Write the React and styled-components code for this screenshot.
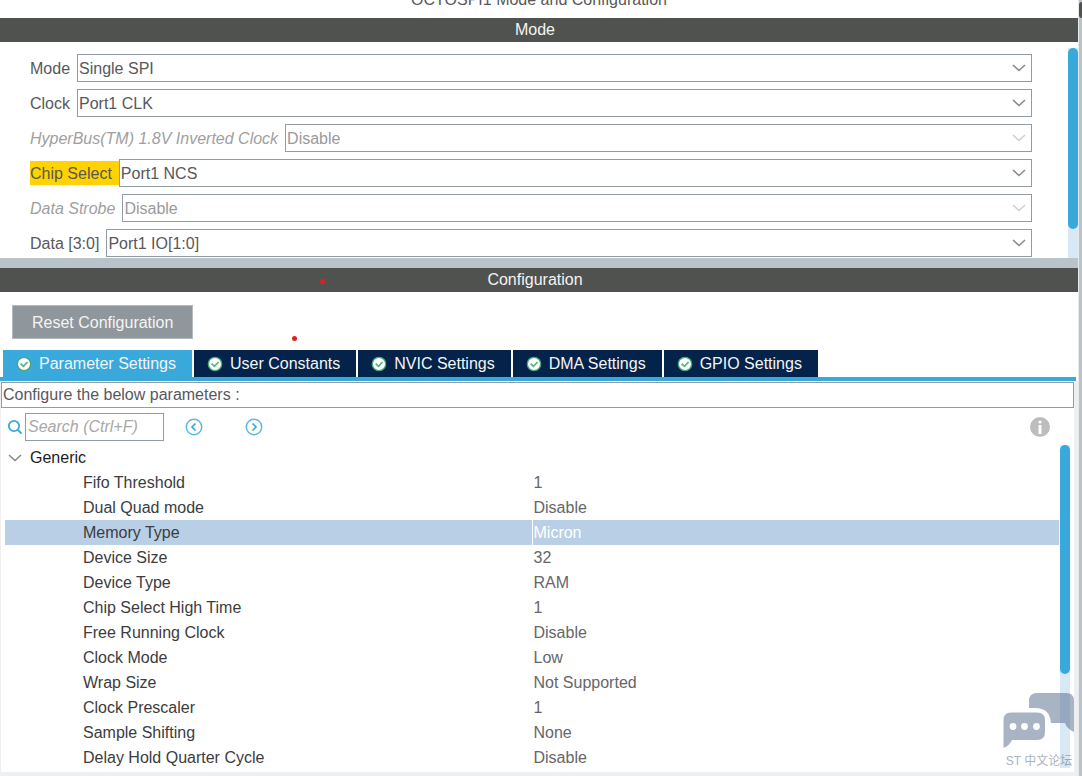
import React, { useState } from "react";
import styled, { createGlobalStyle } from "styled-components";

const modeFields = [
  { id: "mode", label: "Mode", value: "Single SPI" },
  { id: "clock", label: "Clock", value: "Port1 CLK" },
  {
    id: "hyperbus",
    label: "HyperBus(TM) 1.8V Inverted Clock",
    value: "Disable",
    disabled: true,
  },
  { id: "cs", label: "Chip Select", value: "Port1 NCS", marked: true },
  { id: "strobe", label: "Data Strobe", value: "Disable", disabled: true },
  { id: "data", label: "Data [3:0]", value: "Port1 IO[1:0]" },
];

const tabs = [
  "Parameter Settings",
  "User Constants",
  "NVIC Settings",
  "DMA Settings",
  "GPIO Settings",
];

const parameters = [
  ["Fifo Threshold", "1"],
  ["Dual Quad mode", "Disable"],
  ["Memory Type", "Micron"],
  ["Device Size", "32"],
  ["Device Type", "RAM"],
  ["Chip Select High Time", "1"],
  ["Free Running Clock", "Disable"],
  ["Clock Mode", "Low"],
  ["Wrap Size", "Not Supported"],
  ["Clock Prescaler", "1"],
  ["Sample Shifting", "None"],
  ["Delay Hold Quarter Cycle", "Disable"],
];

const Chevron = ({ color = "#8a8a8a" }) => (
  <svg width="14" height="8" viewBox="0 0 14 8" fill="none" aria-hidden="true">
    <path d="M1 1L7 6.5L13 1" stroke={color} strokeWidth="1.6" />
  </svg>
);

const CheckIcon = () => (
  <svg width="16" height="16" viewBox="0 0 16 16" aria-hidden="true">
    <circle cx="8" cy="8" r="6.7" fill="#fff" stroke="#45a877" strokeWidth="1.3" />
    <path
      d="M4.6 7.6L7.4 10.4L11.6 6"
      fill="none"
      stroke="#55b47c"
      strokeWidth="1.7"
    />
  </svg>
);

const SearchIcon = () => (
  <svg width="16" height="16" viewBox="0 0 16 16" fill="none" aria-hidden="true">
    <circle cx="7" cy="7" r="5.2" stroke="#39a9dc" strokeWidth="1.8" />
    <path d="M10.8 10.8L14.6 14.6" stroke="#39a9dc" strokeWidth="2" />
  </svg>
);

const ArrowIcon = ({ next }) => (
  <svg width="18" height="18" viewBox="0 0 18 18" fill="none" aria-hidden="true">
    <circle cx="9" cy="9" r="7.7" stroke="#5cb8e4" strokeWidth="1.5" />
    <path
      d={next ? "M7.5 5.5L11 9L7.5 12.5" : "M10.5 5.5L7 9L10.5 12.5"}
      stroke="#39a9dc"
      strokeWidth="1.7"
    />
  </svg>
);

const InfoIcon = () => (
  <svg width="20" height="20" viewBox="0 0 20 20" aria-hidden="true">
    <circle cx="10" cy="10" r="10" fill="#bdbdbd" />
    <circle cx="10" cy="5" r="1.6" fill="#fff" />
    <path d="M8.5 8H11.5V17H8.5Z" fill="#fff" />
  </svg>
);

const ForumLogo = () => (
  <svg width="72" height="56" viewBox="0 0 72 56" aria-hidden="true">
    <path
      d="M26 15V8Q26 0 34 0H63Q71 0 71 8V39Q64 36 62 30H48Q47 15 32 15Z"
      fill="#53698a"
    />
    <path
      d="M8 19.500H34Q42 19.500 42 27V39Q42 47 34 47H9Q7 52 .5 55V27Q.5 19.500 8 19.500Z"
      fill="#53698a"
    />
    <circle cx="10" cy="33.500" r="3.400" fill="#fff" />
    <circle cx="21.500" cy="33.500" r="3.400" fill="#fff" />
    <circle cx="33.500" cy="33.500" r="3.400" fill="#fff" />
  </svg>
);

const App = () => {
  const [activeTab, setActiveTab] = useState(0);
  const [selected, setSelected] = useState("Memory Type");
  const [open, setOpen] = useState(true);

  return (
    <>
      <GlobalStyle />
      <Page>
        <Main>
          <Title>OCTOSPI1 Mode and Configuration</Title>
          <SectionBar>Mode</SectionBar>
          <ModePanel>
            <ModeForm>
              {modeFields.map((field) => (
                <Field key={field.id}>
                  <FieldLabel
                    htmlFor={field.id}
                    $disabled={field.disabled}
                    $marked={field.marked}
                  >
                    {field.label}
                  </FieldLabel>
                  <SelectBox>
                    <Select id={field.id} disabled={field.disabled}>
                      <option>{field.value}</option>
                    </Select>
                    <Chevron color={field.disabled ? "#d0d0d0" : "#8a8a8a"} />
                  </SelectBox>
                </Field>
              ))}
            </ModeForm>
            <Track>
              <Thumb $length="86%" />
            </Track>
          </ModePanel>
          <Splitter />
          <SectionBar>
            Configuration
            <Dot $left={320} $top={11} />
          </SectionBar>
          <ConfigPanel>
            <ResetArea>
              <ResetButton type="button">Reset Configuration</ResetButton>
              <Dot $left={292} $top={44} />
            </ResetArea>
            <TabBar role="tablist">
              {tabs.map((tab, i) => (
                <Tab
                  key={tab}
                  type="button"
                  role="tab"
                  aria-selected={activeTab === i}
                  $active={activeTab === i}
                  onClick={() => setActiveTab(i)}
                >
                  <CheckIcon />
                  {tab}
                </Tab>
              ))}
            </TabBar>
            <TabBody>
              <Hint>Configure the below parameters :</Hint>
              <Toolbar>
                <SearchLabel htmlFor="search" aria-label="Search">
                  <SearchIcon />
                </SearchLabel>
                <SearchInput id="search" placeholder="Search (Ctrl+F)" />
                <IconButton type="button" aria-label="Previous">
                  <ArrowIcon />
                </IconButton>
                <IconButton type="button" aria-label="Next">
                  <ArrowIcon next />
                </IconButton>
                <InfoButton type="button" aria-label="Information">
                  <InfoIcon />
                </InfoButton>
              </Toolbar>
              <Tree>
                <Table>
                  <tbody>
                    <tr>
                      <GroupCell colSpan={2}>
                        <GroupButton
                          type="button"
                          aria-expanded={open}
                          onClick={() => setOpen(!open)}
                        >
                          <Chevron />
                          Generic
                        </GroupButton>
                      </GroupCell>
                    </tr>
                    {open &&
                      parameters.map(([name, value]) => (
                        <Row
                          key={name}
                          $selected={selected === name}
                          onClick={() => setSelected(name)}
                        >
                          <th scope="row">{name}</th>
                          <td>{value}</td>
                        </Row>
                      ))}
                  </tbody>
                </Table>
                <TreeTrack>
                  <Thumb $length="71%" />
                </TreeTrack>
              </Tree>
            </TabBody>
          </ConfigPanel>
        </Main>
        <Rail>
          <RailHandle />
        </Rail>
        <Watermark>
          <ForumLogo />
          ST 中文论坛
        </Watermark>
      </Page>
    </>
  );
};

export default App;

const GlobalStyle = createGlobalStyle`
  * {
    box-sizing: border-box;
  }
  body {
    margin: 0;
    background: #fff;
  }
  body, button, input, select {
    font-family: "Liberation Sans", Arial, "Noto Sans CJK SC", sans-serif;
    font-size: 16px;
    line-height: 18px;
    color: #58585c;
  }
  svg {
    display: block;
    flex-shrink: 0;
  }
`;

const Page = styled.div`
  position: relative;
  display: flex;
  min-height: 100vh;
`;

const Main = styled.main`
  flex: 1;
  min-width: 0;
  display: flex;
  flex-direction: column;
`;

const Title = styled.div`
  display: flex;
  justify-content: center;
  align-items: flex-end;
  height: 18px;
  padding-bottom: 9px;
  overflow: hidden;
`;

const SectionBar = styled.div`
  position: relative;
  padding: 3px 8px 3px 0;
  text-align: center;
  color: #f4f4f4;
  background: #50524f;
`;

const ModePanel = styled.div`
  display: flex;
  justify-content: space-between;
  padding-top: 6px;
`;

const ModeForm = styled.form`
  flex: 1;
  display: flex;
  flex-direction: column;
  gap: 7px;
  padding: 6px 0 1px 30px;
  margin-right: 36px;
`;

const Field = styled.div`
  display: flex;
  align-items: center;
`;

const FieldLabel = styled.label`
  padding: 4px 7px 2px 0;
  white-space: nowrap;
  font-style: ${({ $disabled }) => ($disabled ? "italic" : "normal")};
  color: ${({ $disabled }) => ($disabled ? "#a0a0a0" : "#58585c")};
  background: ${({ $marked }) => ($marked ? "#ffd200" : "transparent")};
`;

const SelectBox = styled.div`
  position: relative;
  flex: 1;
  svg {
    position: absolute;
    right: 6px;
    top: 10px;
    pointer-events: none;
  }
`;

const Select = styled.select`
  display: block;
  width: 100%;
  height: 28px;
  padding: 2px 24px 0 1px;
  appearance: none;
  border: 1px solid #939ba3;
  border-radius: 0;
  background: #fff;
  &:disabled {
    color: #9a9a9c;
    opacity: 1;
  }
`;

const Track = styled.div`
  width: 10px;
  flex-shrink: 0;
  background: #d9e8f5;
`;

const TreeTrack = styled(Track)`
  margin-bottom: 4px;
`;

const Thumb = styled.div`
  height: ${({ $length }) => $length};
  border-radius: 5px;
  background: #39a9dc;
`;

const Splitter = styled.div`
  height: 10px;
  background: #b8c4ca;
`;

const Dot = styled.span`
  position: absolute;
  left: ${({ $left }) => $left}px;
  top: ${({ $top }) => $top}px;
  width: 5px;
  height: 5px;
  border-radius: 50%;
  background: #e81c1c;
`;

const ConfigPanel = styled.div`
  flex: 1;
  display: flex;
  flex-direction: column;
`;

const ResetArea = styled.div`
  position: relative;
  padding: 13px 12px 11px;
`;

const ResetButton = styled.button`
  display: block;
  height: 34px;
  padding: 1px 19px 0;
  border: 1px solid #b4b9bd;
  color: #f4f4f4;
  background: #8f979d;
`;

const TabBar = styled.div`
  display: flex;
  gap: 2px;
  padding-left: 3px;
  margin-right: 2px;
  border-bottom: 4px solid #39a9dc;
`;

const Tab = styled.button`
  display: flex;
  align-items: center;
  gap: 7px;
  height: 27px;
  padding: 0 16px 0 13px;
  border: 0;
  white-space: nowrap;
  color: #f4f4f4;
  background: ${({ $active }) => ($active ? "#39a9dc" : "#03234b")};
`;

const TabBody = styled.div`
  flex: 1;
  display: flex;
  flex-direction: column;
  padding-top: 1px;
  border: solid #eeeff1;
  border-width: 0 4px 4px 1px;
`;

const Hint = styled.div`
  padding: 3px 1px;
  border: 1px solid #939ba3;
`;

const Toolbar = styled.div`
  display: flex;
  align-items: center;
  padding: 5px 24px 4px 6px;
`;

const SearchLabel = styled.label`
  margin-right: 2px;
`;

const SearchInput = styled.input`
  width: 139px;
  height: 28px;
  padding: 0 2px;
  margin-right: 21px;
  border: 1px solid #939ba3;
  border-radius: 0;
  &::placeholder {
    font-style: italic;
    color: #a8a8a8;
  }
`;

const IconButton = styled.button`
  padding: 0;
  margin-right: 42px;
  border: 0;
  background: none;
`;

const InfoButton = styled(IconButton)`
  margin: 0 0 0 auto;
`;

const Tree = styled.div`
  flex: 1;
  display: flex;
  align-items: stretch;
  gap: 1px;
  padding: 0 4px;
`;

const Table = styled.table`
  flex: 1;
  align-self: flex-start;
  table-layout: fixed;
  border-collapse: collapse;
`;

const GroupCell = styled.td`
  height: 25px;
  padding: 0;
`;

const GroupButton = styled.button`
  display: flex;
  align-items: center;
  gap: 8px;
  padding: 0 3px;
  border: 0;
  color: #1c1c1e;
  background: none;
`;

const Row = styled.tr`
  background: ${({ $selected }) => ($selected ? "#b8cfe5" : "transparent")};
  th,
  td {
    height: 25px;
    padding: 0 0 0 1px;
    text-align: left;
    font-weight: normal;
  }
  th {
    width: 50%;
    padding-left: 78px;
    color: #3c3c40;
  }
  td {
    border-left: 1px solid #fff;
    color: ${({ $selected }) => ($selected ? "#fff" : "#66666a")};
  }
`;

const Rail = styled.div`
  width: 4px;
  padding-top: 2px;
  border-left: 1px solid #e6e9ec;
  background: #b8c4ca;
`;

const RailHandle = styled.div`
  height: 16px;
  border-radius: 4px 0 0 4px;
  background: #50524f;
`;

const Watermark = styled.div`
  position: absolute;
  right: 7px;
  bottom: 6px;
  display: flex;
  flex-direction: column;
  align-items: center;
  gap: 3px;
  font-size: 12px;
  color: #53698a;
  opacity: 0.5;
  pointer-events: none;
`;
